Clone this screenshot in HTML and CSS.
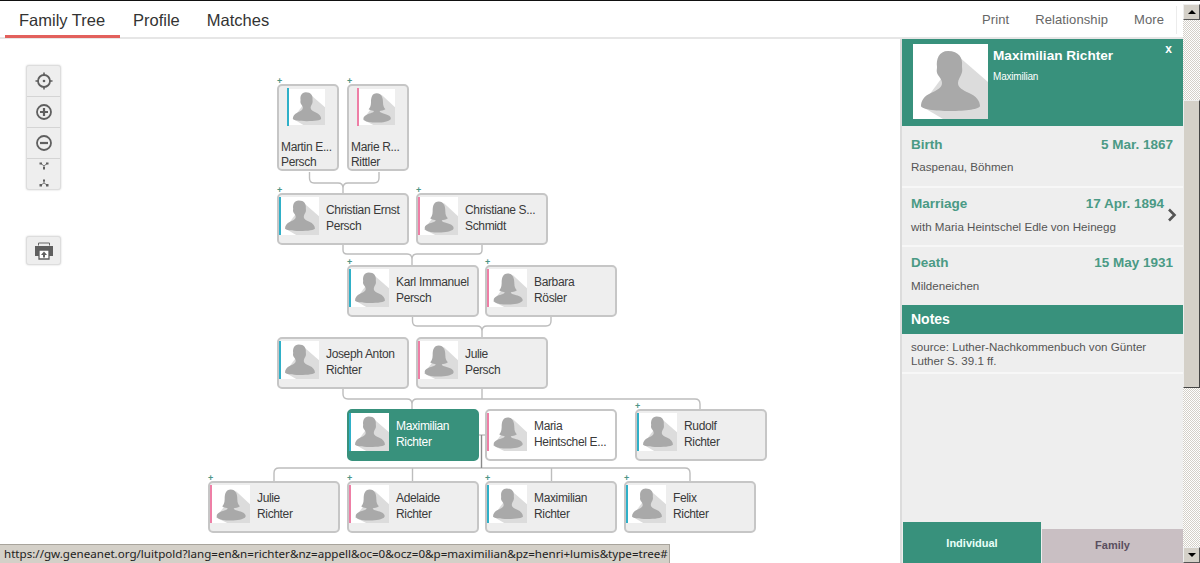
FILE: index.html
```html
<!DOCTYPE html>
<html lang="en">
<head>
<meta charset="utf-8">
<title>Family Tree</title>
<link rel="stylesheet" href="styles.css">
</head>
<body>
<svg class="defs" aria-hidden="true">
  <symbol id="man" viewBox="0 0 75 75">
    <rect width="75" height="75" fill="#fff"/>
    <path d="M45 12L75 38V75H30L8 62Z" fill="#dcdcdc"/>
    <path d="M35 7C26 7 23 15 24 23C24 26 23 27 25 31C27 34 29 36 29 39C29 44 24 46 18 49C11 52 8 57 8 62C8 65 22 67 37 67C53 67 67 65 67 62C67 57 63 52 56 49C50 46 45 44 45 39C45 36 47 33 48 31C50 27 49 25 49 22C50 14 46 7 35 7Z" fill="#a9a9a9"/>
  </symbol>
  <symbol id="woman" viewBox="0 0 75 75">
    <rect width="75" height="75" fill="#fff"/>
    <path d="M47 12L75 38V75H30L8 64Z" fill="#dcdcdc"/>
    <path d="M37 9C27 9 25 18 25 28C25 36 22 40 20 42C24 45 30 45 31 46C30 50 24 50 17 53C10 56 8 60 10 64C14 69 26 70 37 70C50 70 62 68 66 63C68 58 62 54 54 52C47 50 43 49 43 46C46 45 51 45 55 42C52 39 50 35 50 28C50 18 47 9 37 9Z" fill="#a9a9a9"/>
  </symbol>
</svg>

<div class="page">
  <div class="main">
    <header class="topbar">
      <nav class="tabs">
        <a class="tab tab-active">Family Tree</a>
        <a class="tab">Profile</a>
        <a class="tab">Matches</a>
      </nav>
      <nav class="actions">
        <a>Print</a>
        <a>Relationship</a>
        <a>More</a>
      </nav>
    </header>

    <div class="content">
      <section class="canvas">
        <div class="toolbox">
          <button class="tool"><svg width="18" height="18" viewBox="0 0 18 18"><circle cx="9" cy="9" r="6" fill="none" stroke="#5f5f5f" stroke-width="1.8"/><circle cx="9" cy="9" r="1.300" fill="#5f5f5f"/><path d="M9 0.500V4M9 14V17.500M0.500 9H4M14 9H17.500" stroke="#5f5f5f" stroke-width="1.600"/></svg></button>
          <button class="tool"><svg width="18" height="18" viewBox="0 0 18 18"><circle cx="9" cy="9" r="7" fill="none" stroke="#5f5f5f" stroke-width="1.800"/><path d="M5 9H13M9 5V13" stroke="#5f5f5f" stroke-width="2.200"/></svg></button>
          <button class="tool"><svg width="18" height="18" viewBox="0 0 18 18"><circle cx="9" cy="9" r="7" fill="none" stroke="#5f5f5f" stroke-width="1.800"/><path d="M5 9H13" stroke="#5f5f5f" stroke-width="2.200"/></svg></button>
          <div class="tool-small">
            <svg width="10" height="8" viewBox="0 0 10 8"><path d="M2 1.500L5 4L8 1.500M5 4V6" fill="none" stroke="#777"/><path d="M0.500 0.500H3V2.500H0.500ZM7 0.500H9.500V2.500H7ZM4 5H6V7.500H4Z" fill="#5f5f5f"/></svg>
            <svg width="10" height="8" viewBox="0 0 10 8"><path d="M5 1V4M2 6L5 4L8 6" fill="none" stroke="#777"/><path d="M4 0.500H6V2.500H4ZM0.500 5H3V7.500H0.500ZM7 5H9.500V7.500H7Z" fill="#5f5f5f"/></svg>
          </div>
        </div>
        <button class="printer"><svg width="20" height="18" viewBox="0 0 20 18"><path d="M4.500 3.500V1H15.500V3.500" fill="none" stroke="#666"/><path d="M1 4H19V14H15V8H5V14H1Z" fill="#5f5f5f"/><path d="M5 8H15V17H5Z" fill="#fff" stroke="#5f5f5f" stroke-width="1.300"/><path d="M10 9.500L13 13H11V15.500H9V13H7Z" fill="#5f5f5f"/></svg></button>

        <svg class="links" width="900" height="524" viewBox="0 39 900 524">
          <g fill="none" stroke="#bdbdbd" stroke-width="1.4">
            <path d="M309.500 172V178Q309.500 183 314 183H338Q343 183 343 188V193M343 188Q343 183 348 183H374Q379 183 379 178V172"/>
            <path d="M343 245V250Q343 254 347 254H407Q412 254 412 259V265M412 259Q412 254 417 254H478Q482 254 482 250V245"/>
            <path d="M412.500 316V321Q412.500 326 417 326H477Q482 326 482 331V337M482 331Q482 326 487 326H546Q551 326 551 321V316"/>
            <path d="M343 389V394Q343 399 348 399H407Q412 399 412 404V409M412 404Q412 399 417 399H695Q700 399 700 404V409M482 389V399"/>
            <path d="M274 481V473Q274 468 279 468H685Q690 468 690 473V481M412.500 468V481M551.500 468V481"/>
            <path d="M479 435H486"/>
          </g>
          <path d="M481.500 435V468" fill="none" stroke="#8a8a8a" stroke-width="1.4"/>
        </svg>

        <article class="node tall blue at-martin"><span class="plus">+</span><div class="tall-top"><span class="bar"></span><svg class="avatar"><use href="#man"/></svg></div><div class="names"><span>Martin E...</span><span>Persch</span></div></article>
        <article class="node tall pink at-marie"><span class="plus">+</span><div class="tall-top"><span class="bar"></span><svg class="avatar"><use href="#woman"/></svg></div><div class="names"><span>Marie R...</span><span>Rittler</span></div></article>

        <article class="node blue at-christian"><span class="plus">+</span><span class="bar"></span><svg class="avatar"><use href="#man"/></svg><div class="names"><span>Christian Ernst</span><span>Persch</span></div></article>
        <article class="node pink at-christiane"><span class="plus">+</span><span class="bar"></span><svg class="avatar"><use href="#woman"/></svg><div class="names"><span>Christiane S...</span><span>Schmidt</span></div></article>

        <article class="node blue at-karl"><span class="plus">+</span><span class="bar"></span><svg class="avatar"><use href="#man"/></svg><div class="names"><span>Karl Immanuel</span><span>Persch</span></div></article>
        <article class="node pink at-barbara"><span class="plus">+</span><span class="bar"></span><svg class="avatar"><use href="#woman"/></svg><div class="names"><span>Barbara</span><span>Rösler</span></div></article>

        <article class="node blue at-joseph"><span class="bar"></span><svg class="avatar"><use href="#man"/></svg><div class="names"><span>Joseph Anton</span><span>Richter</span></div></article>
        <article class="node pink at-julie"><span class="bar"></span><svg class="avatar"><use href="#woman"/></svg><div class="names"><span>Julie</span><span>Persch</span></div></article>

        <article class="node blue selected at-max"><span class="bar"></span><svg class="avatar"><use href="#man"/></svg><div class="names"><span>Maximilian</span><span>Richter</span></div></article>
        <article class="node pink spouse at-maria"><span class="bar"></span><svg class="avatar"><use href="#woman"/></svg><div class="names"><span>Maria</span><span>Heintschel E...</span></div></article>
        <article class="node blue at-rudolf"><span class="plus">+</span><span class="bar"></span><svg class="avatar"><use href="#man"/></svg><div class="names"><span>Rudolf</span><span>Richter</span></div></article>

        <article class="node pink at-julie2"><span class="plus">+</span><span class="bar"></span><svg class="avatar"><use href="#woman"/></svg><div class="names"><span>Julie</span><span>Richter</span></div></article>
        <article class="node pink at-adelaide"><span class="plus">+</span><span class="bar"></span><svg class="avatar"><use href="#woman"/></svg><div class="names"><span>Adelaide</span><span>Richter</span></div></article>
        <article class="node blue at-max2"><span class="plus">+</span><span class="bar"></span><svg class="avatar"><use href="#man"/></svg><div class="names"><span>Maximilian</span><span>Richter</span></div></article>
        <article class="node blue at-felix"><span class="plus">+</span><span class="bar"></span><svg class="avatar"><use href="#man"/></svg><div class="names"><span>Felix</span><span>Richter</span></div></article>
      </section>

      <aside class="panel">
        <div class="panel-head">
          <svg class="panel-photo"><use href="#man"/></svg>
          <div class="panel-title">
            <strong>Maximilian Richter</strong>
            <small>Maximilian</small>
          </div>
          <span class="panel-close">x</span>
        </div>
        <div class="event event-birth">
          <div class="event-line"><b>Birth</b><b>5 Mar. 1867</b></div>
          <p>Raspenau, Böhmen</p>
        </div>
        <div class="event event-marriage">
          <div class="event-line"><b>Marriage</b><b>17 Apr. 1894</b></div>
          <p>with Maria Heintschel Edle von Heinegg</p>
          <svg class="chevron" width="10" height="14" viewBox="0 0 10 14"><path d="M2 1.500L7.500 7L2 12.500" fill="none" stroke="#555" stroke-width="2.600"/></svg>
        </div>
        <div class="event event-death">
          <div class="event-line"><b>Death</b><b>15 May 1931</b></div>
          <p>Mildeneichen</p>
        </div>
        <div class="notes-head">Notes</div>
        <p class="notes-text">source: Luther-Nachkommenbuch von Günter Luther S. 39.1 ff.</p>
        <div class="panel-tabs">
          <a class="ptab ptab-on">Individual</a>
          <a class="ptab ptab-off">Family</a>
        </div>
      </aside>
    </div>
  </div>

  <div class="scrollbar">
    <span class="sb-btn"><i class="arrow-up"></i></span>
    <div class="sb-track"><div class="sb-gap-top"></div><div class="sb-thumb"></div></div>
    <span class="sb-btn"><i class="arrow-down"></i></span>
  </div>
</div>

<div class="status">https://gw.geneanet.org/luitpold?lang=en&amp;n=richter&amp;nz=appell&amp;oc=0&amp;ocz=0&amp;p=maximilian&amp;pz=henri+lumis&amp;type=tree#</div>
</body>
</html>
```

FILE: styles.css
```css
* { box-sizing: border-box; }
html, body { margin: 0; height: 563px; overflow: hidden; }
body { font-family: "Liberation Sans", Arial, sans-serif; color: #333; background: #fff; position: relative; }
.defs { position: absolute; width: 0; height: 0; }

.page { display: flex; height: 563px; border-top: 1px solid #111; }
.main { flex: 1; min-width: 0; display: flex; flex-direction: column; }

/* top bar */
.topbar { height: 38px; flex: none; display: flex; justify-content: space-between; border-bottom: 2px solid #e6e6e6; padding-left: 5px; }
.tabs { display: flex; gap: 13px; }
.tab { font-size: 16.5px; color: #333; padding: 0 14px 0 14px; line-height: 38px; height: 37px; width: 115px; }
.tab-active { border-bottom: 3px solid #e2605c; }
.tabs .tab:not(.tab-active) { padding: 0; width: auto; }
.tabs .tab:nth-child(3) { margin-left: 14px; }
.actions { display: flex; gap: 26px; font-size: 13px; letter-spacing: .1px; color: #666; align-items: center; padding: 0 19px 0 0; height: 36px; position: relative; }
.actions::after { content: ""; position: absolute; right: 6px; top: 5px; bottom: 3px; width: 1px; background: #ececec; }

.content { flex: 1; min-height: 0; display: flex; }

/* tree canvas */
.canvas { position: relative; width: 900px; flex: none; overflow: hidden; }
.links { position: absolute; left: 0; top: 0; }

.toolbox { position: absolute; left: 26px; top: 26px; width: 35px; height: 125px; background: #eee; border: 1px solid #ddd; border-radius: 3px; box-shadow: 0 0 2px rgba(0,0,0,.2); display: flex; flex-direction: column; }
.tool { height: 31px; flex: none; border: 0; border-bottom: 1px solid #d4d4d4; background: none; padding: 0; display: flex; align-items: center; justify-content: center; }
.tool-small { flex: 1; display: flex; flex-direction: column; align-items: center; justify-content: space-between; padding: 3px 0 2px; }
.printer { position: absolute; left: 26px; top: 197px; width: 35px; height: 29px; background: #eee; border: 1px solid #ddd; border-radius: 3px; box-shadow: 0 0 2px rgba(0,0,0,.2); padding: 0; display: flex; align-items: center; justify-content: center; }

.node { position: absolute; width: 132px; height: 52px; background: #eee; border: 2px solid #c6c6c6; border-radius: 5px; display: flex; align-items: flex-start; padding: 2px 0 0 0; font-size: 12px; color: #3a3a3a; letter-spacing: -.35px; }
.node .bar { width: 2px; height: 38px; flex: none; }
.blue .bar { background: #2fb0c8; }
.pink .bar { background: #ee7fa6; }
.avatar { width: 38px; height: 38px; flex: none; display: block; }
.names { display: flex; flex-direction: column; margin-left: 7px; line-height: 16px; padding-top: 5px; white-space: nowrap; }
.plus { position: absolute; left: -2px; top: -10px; font-size: 9px; line-height: 10px; font-weight: bold; color: #4d9586; letter-spacing: 0; }

.tall { width: 62px; height: 87px; display: block; padding: 2px 0 0 8px; }
.tall-top { display: flex; }
.tall .avatar { width: 36px; }
.tall .names { margin: 14px 0 0 -6px; padding: 0; line-height: 15px; }

.selected { background: #38917c; border-color: #38917c; color: #fff; }
.spouse { background: #fff; }

.at-martin { left: 277px; top: 45px; }
.at-marie { left: 347px; top: 45px; }
.at-christian { left: 277px; top: 154px; }
.at-christiane { left: 416px; top: 154px; }
.at-karl { left: 347px; top: 226px; }
.at-barbara { left: 485px; top: 226px; }
.at-joseph { left: 277px; top: 298px; }
.at-julie { left: 416px; top: 298px; }
.at-max { left: 347px; top: 370px; }
.at-maria { left: 485px; top: 370px; }
.at-rudolf { left: 635px; top: 370px; }
.at-julie2 { left: 208px; top: 442px; }
.at-adelaide { left: 347px; top: 442px; }
.at-max2 { left: 485px; top: 442px; }
.at-felix { left: 624px; top: 442px; }

/* side panel */
.panel { flex: 1; min-width: 0; background: #eee; border-left: 2px solid #dcdcdc; display: flex; flex-direction: column; }
.panel-head { height: 87px; flex: none; background: #38917c; display: flex; padding: 5px 0 0 11px; color: #fff; position: relative; }
.panel-photo { width: 75px; height: 75px; flex: none; display: block; }
.panel-title { margin-left: 5px; display: flex; flex-direction: column; }
.panel-title strong { font-size: 13.6px; line-height: 15px; margin-top: 4px; }
.panel-title small { font-size: 10px; line-height: 12px; margin-top: 8px; letter-spacing: -.2px; }
.panel-close { position: absolute; right: 11px; top: 3px; font-size: 12px; font-weight: bold; }

.event { flex: none; padding: 8px 10px 0 9px; border-bottom: 2px solid #f7f7f7; position: relative; }
.event-birth { margin-top: 1px; height: 61px; padding-top: 10px; }
.event-marriage { height: 59px; padding-right: 19px; }
.event-death { height: 58px; border-bottom: 0; }
.event-line { display: flex; justify-content: space-between; color: #4a9a85; font-size: 13.5px; line-height: 16px; }
.event p { margin: 8px 0 0; font-size: 11.6px; line-height: 14px; color: #555; }
.event-birth p { margin-top: 7px; }
.chevron { position: absolute; right: 6px; top: 20px; }

.notes-head { flex: none; height: 29px; background: #38917c; color: #fff; font-weight: bold; font-size: 14px; line-height: 29px; padding-left: 9px; }
.notes-text { flex: none; margin: 0; height: 40px; padding: 6px 9px 0; font-size: 11.6px; line-height: 14px; color: #555; border-bottom: 2px solid #f7f7f7; }

.panel-tabs { margin-top: auto; display: flex; align-items: flex-end; padding-left: 1px; }
.ptab { display: flex; align-items: center; justify-content: center; font-weight: bold; font-size: 11px; }
.ptab-on { width: 138px; height: 41px; padding-top: 1px; background: #38917c; color: #e8fff8; }
.ptab-off { flex: 1; height: 34px; padding-bottom: 2px; margin-left: 1px; background: #c9bfc3; color: #5a4f5f; }

/* browser chrome */
.scrollbar { width: 17px; flex: none; display: flex; flex-direction: column; padding-top: 3px; background: #fff; }
.sb-btn { height: 16px; flex: none; background: #d4d0c8; border: 1px solid; border-color: #eee #555 #555 #eee; display: flex; align-items: center; justify-content: center; }
.sb-track { flex: 1; display: flex; flex-direction: column; background: repeating-conic-gradient(#d4d0c8 0 25%, #fff 0 50%) 0 0 / 2px 2px; }
.sb-gap-top { height: 80px; flex: none; }
.sb-thumb { height: 288px; flex: none; background: #d4d0c8; border: 1px solid; border-color: #eee #444 #444 #eee; }
.arrow-up { width: 0; height: 0; border: 4px solid transparent; border-top: 0; border-bottom-color: #000; }
.arrow-down { width: 0; height: 0; border: 4px solid transparent; border-bottom: 0; border-top-color: #000; }

.status { position: absolute; left: 0; bottom: 0; width: 670px; height: 19px; background: #d4d0c8; border-top: 1px solid #a8a49c; border-right: 1px solid #a8a49c; font-family: "Noto Sans", sans-serif; font-size: 11.6px; line-height: 18px; padding-left: 4px; color: #222; white-space: nowrap; overflow: hidden; }
```
